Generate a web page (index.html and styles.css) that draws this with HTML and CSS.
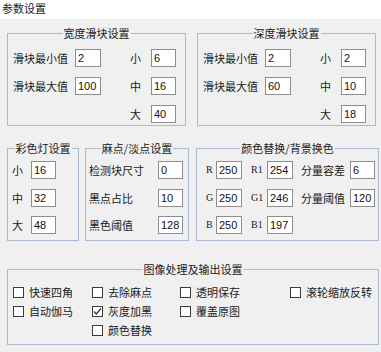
FILE: index.html
```html
<!DOCTYPE html>
<html lang="zh">
<head>
<meta charset="utf-8">
<link rel="stylesheet" href="styles.css">
</head>
<body>
<div class="title">参数设置</div>
<div class="panel">
  <div class="row row1">
    <fieldset class="grp grp-slider">
      <legend>宽度滑块设置</legend>
      <div class="slider-grid">
        <span class="lbl">滑块最小值</span><span class="tb">2</span><span></span><span class="lbl">小</span><span class="tb">6</span>
        <span class="lbl">滑块最大值</span><span class="tb">100</span><span></span><span class="lbl">中</span><span class="tb">16</span>
        <span></span><span></span><span></span><span class="lbl">大</span><span class="tb">40</span>
      </div>
    </fieldset>
    <fieldset class="grp grp-slider">
      <legend>深度滑块设置</legend>
      <div class="slider-grid">
        <span class="lbl">滑块最小值</span><span class="tb">2</span><span></span><span class="lbl">小</span><span class="tb">2</span>
        <span class="lbl">滑块最大值</span><span class="tb">60</span><span></span><span class="lbl">中</span><span class="tb">10</span>
        <span></span><span></span><span></span><span class="lbl">大</span><span class="tb">18</span>
      </div>
    </fieldset>
  </div>
  <div class="row row2">
    <fieldset class="grp grp-lamp">
      <legend>彩色灯设置</legend>
      <div class="lamp-grid">
        <span class="lbl">小</span><span class="tb">16</span>
        <span class="lbl">中</span><span class="tb">32</span>
        <span class="lbl">大</span><span class="tb">48</span>
      </div>
    </fieldset>
    <fieldset class="grp grp-spot">
      <legend>麻点/淡点设置</legend>
      <div class="spot-grid">
        <span class="lbl">检测块尺寸</span><span class="tb">0</span>
        <span class="lbl">黑点占比</span><span class="tb">10</span>
        <span class="lbl">黑色阈值</span><span class="tb">128</span>
      </div>
    </fieldset>
    <fieldset class="grp grp-color">
      <legend>颜色替换/背景换色</legend>
      <div class="color-grid">
        <span class="ch">R</span><span class="tb">250</span><span></span><span class="ch">R1</span><span class="tb">254</span><span></span><span class="lbl">分量容差</span><span class="tb">6</span>
        <span class="ch">G</span><span class="tb">250</span><span></span><span class="ch">G1</span><span class="tb">246</span><span></span><span class="lbl">分量阈值</span><span class="tb">120</span>
        <span class="ch">B</span><span class="tb">250</span><span></span><span class="ch">B1</span><span class="tb">197</span><span></span><span></span><span></span>
      </div>
    </fieldset>
  </div>
  <div class="row row3">
    <fieldset class="grp grp-out">
      <legend>图像处理及输出设置</legend>
      <div class="out-grid">
        <div class="col col1">
          <label class="cb"><span class="box"></span>快速四角</label>
          <label class="cb"><span class="box"></span>自动伽马</label>
        </div>
        <div class="col col2">
          <label class="cb"><span class="box"></span>去除麻点</label>
          <label class="cb"><span class="box"><svg viewBox="0 0 11 11" width="11" height="11"><polyline points="2,5.5 4.3,8 9,2.5" fill="none" stroke="#333" stroke-width="1.2"/></svg></span>灰度加黑</label>
          <label class="cb"><span class="box"></span>颜色替换</label>
        </div>
        <div class="col col3">
          <label class="cb"><span class="box"></span>透明保存</label>
          <label class="cb"><span class="box"></span>覆盖原图</label>
        </div>
        <div class="col col4">
          <label class="cb"><span class="box"></span>滚轮缩放反转</label>
        </div>
      </div>
    </fieldset>
  </div>
</div>
</body>
</html>
```
FILE: styles.css
```css
* { box-sizing: border-box; }
html, body { margin: 0; padding: 0; }
body {
  width: 381px;
  height: 352px;
  background: #f0f0f0;
  font-family: "Noto Sans CJK SC", sans-serif;
  font-size: 11px;
  color: #1a1a1a;
  overflow: hidden;
}
.title {
  height: 19px;
  background: #ffffff;
  padding-left: 2px;
  line-height: 16px;
  font-size: 11px;
}
.panel {
  padding: 7px 0 0 7px;
}
.row {
  display: flex;
}
.row1 { gap: 11px; }
.row2 { gap: 6px; margin-top: 15px; }
.row3 { margin-top: 21px; }

.grp {
  margin: 0;
  padding: 0;
  min-width: 0;
  border: 1px solid #a9bad2;
}
.grp legend {
  margin: 0 auto;
  padding: 0 1px;
  line-height: 14px;
  font-size: 11px;
}
.lbl {
  line-height: 18px;
  white-space: nowrap;
}
.ch {
  font-family: "Liberation Serif", serif;
  font-size: 10px;
  line-height: 18px;
}
.tb {
  height: 18px;
  background: #fff;
  border: 1px solid #8e8e8e;
  font-family: "Liberation Sans", sans-serif;
  font-size: 11px;
  line-height: 16px;
  padding-left: 2px;
  color: #111;
}

.grp-slider { width: 179px; height: 100px; }
.slider-grid {
  display: grid;
  grid-template-columns: 62px 26px 29px 21px 25px;
  grid-auto-rows: 18px;
  row-gap: 10px;
  padding: 9px 0 0 5px;
}

.grp-lamp { width: 72px; height: 100px; }
.grp-spot { width: 104px; height: 100px; margin-right: 1px; }
.grp-color { width: 183px; height: 100px; }

.lamp-grid, .spot-grid, .color-grid {
  display: grid;
  grid-auto-rows: 18px;
  row-gap: 9.5px;
  padding-top: 6px;
}
.lamp-grid {
  grid-template-columns: 19px 25px;
  padding-left: 4px;
}
.spot-grid {
  grid-template-columns: 69px 25px;
  padding-left: 3px;
}
.color-grid {
  grid-template-columns: 10px 26px 9px 16px 26px 8px 49px 25px;
  padding-left: 9px;
}

.grp-out { width: 372px; height: 83px; }
.out-grid {
  display: flex;
  padding: 11px 0 0 5px;
}
.col {
  display: flex;
  flex-direction: column;
  gap: 8px;
}
.col1 { width: 79px; }
.col2 { width: 88px; }
.col3 { width: 110px; }
.cb {
  display: flex;
  align-items: center;
  gap: 5px;
  height: 11px;
  line-height: 11px;
  white-space: nowrap;
}
.box {
  width: 11px;
  height: 11px;
  border: 1px solid #3c3c3c;
  background: #fff;
  display: flex;
  flex-shrink: 0;
}
.box svg { display: block; margin: -1px; }
```
